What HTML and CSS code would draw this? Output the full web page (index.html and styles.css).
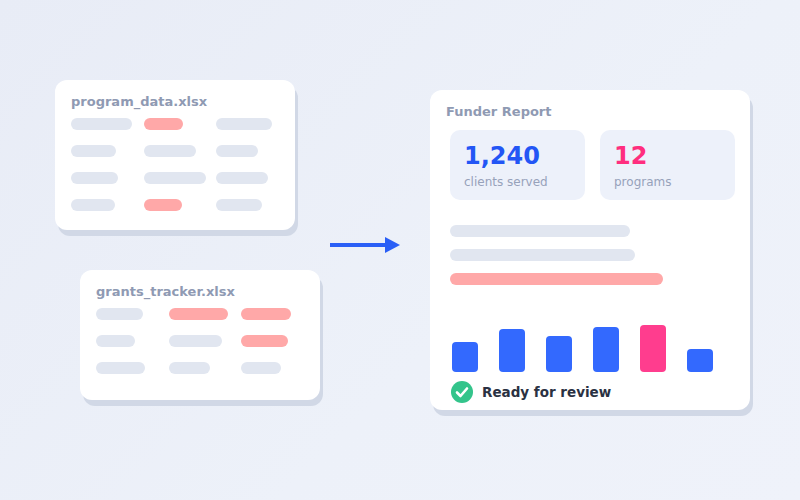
FILE: index.html
```html
<!DOCTYPE html>
<html lang="en">
<head>
<meta charset="utf-8">
<title>Funder Report</title>
<link rel="stylesheet" href="styles.css">
</head>
<body>
<main class="stage">
  <section class="sources">
    <div class="sheet sheet-program">
      <div class="sheet-title">program_data.xlsx</div>
      <div class="cells">
        <span class="cell" style="width:61px"></span>
        <span class="cell hot" style="width:39px"></span>
        <span class="cell" style="width:56px"></span>
        <span class="cell" style="width:45px"></span>
        <span class="cell" style="width:52px"></span>
        <span class="cell" style="width:42px"></span>
        <span class="cell" style="width:47px"></span>
        <span class="cell" style="width:62px"></span>
        <span class="cell" style="width:52px"></span>
        <span class="cell" style="width:44px"></span>
        <span class="cell hot" style="width:38px"></span>
        <span class="cell" style="width:46px"></span>
      </div>
    </div>
    <div class="sheet sheet-grants">
      <div class="sheet-title">grants_tracker.xlsx</div>
      <div class="cells">
        <span class="cell" style="width:47px"></span>
        <span class="cell hot" style="width:59px"></span>
        <span class="cell hot" style="width:50px"></span>
        <span class="cell" style="width:39px"></span>
        <span class="cell" style="width:53px"></span>
        <span class="cell hot" style="width:47px"></span>
        <span class="cell" style="width:49px"></span>
        <span class="cell" style="width:41px"></span>
        <span class="cell" style="width:40px"></span>
      </div>
    </div>
  </section>

  <svg class="arrow" width="70" height="16" viewBox="0 0 70 16" aria-hidden="true">
    <rect x="0" y="6" width="57" height="4" fill="#2a5ff6"/>
    <polygon points="55,0 70,8 55,16" fill="#2a5ff6"/>
  </svg>

  <section class="report">
    <div class="report-title">Funder Report</div>
    <div class="stats">
      <div class="stat">
        <div class="stat-num blue">1,240</div>
        <div class="stat-label">clients served</div>
      </div>
      <div class="stat">
        <div class="stat-num pink">12</div>
        <div class="stat-label">programs</div>
      </div>
    </div>
    <div class="lines">
      <span class="line" style="width:180px"></span>
      <span class="line" style="width:185px"></span>
      <span class="line hot" style="width:213px"></span>
    </div>
    <div class="bars">
      <span class="bar" style="height:30px"></span>
      <span class="bar" style="height:43px"></span>
      <span class="bar" style="height:36px"></span>
      <span class="bar" style="height:45px"></span>
      <span class="bar accent" style="height:47px"></span>
      <span class="bar" style="height:23px"></span>
    </div>
    <div class="status">
      <svg class="check" width="22" height="22" viewBox="0 0 22 22" aria-hidden="true">
        <circle cx="11" cy="11" r="11" fill="#33c48b"/>
        <path d="M6 11.5 L9.5 15 L16 7.5" fill="none" stroke="#ffffff" stroke-width="2.6" stroke-linecap="round" stroke-linejoin="round"/>
      </svg>
      <span class="status-text">Ready for review</span>
    </div>
  </section>
</main>
</body>
</html>
```

FILE: styles.css
```css
* {
  box-sizing: border-box;
}

html, body {
  margin: 0;
  padding: 0;
}

body {
  width: 800px;
  height: 500px;
  overflow: hidden;
  background: linear-gradient(135deg, #e8ecf6 0%, #edf1f9 60%, #eff2fa 100%);
  font-family: "DejaVu Sans", "Liberation Sans", sans-serif;
}

.stage {
  display: flex;
  align-items: flex-start;
  padding: 80px 0 0 55px;
}

.sources {
  display: flex;
  flex-direction: column;
  gap: 40px;
  width: 265px;
}

.sheet {
  width: 240px;
  background: #ffffff;
  border-radius: 12px;
  box-shadow: 3px 6px 0 #d1d8e6;
  padding: 14px 16px 0 16px;
}

.sheet-program {
  height: 150px;
}

.sheet-grants {
  height: 130px;
  margin-left: 25px;
}

.sheet-title,
.report-title {
  font-size: 13px;
  line-height: 16px;
  font-weight: bold;
  color: #8f9ab3;
}

.cells {
  display: grid;
  grid-template-columns: 73px 72px auto;
  row-gap: 15px;
  margin-top: 8px;
}

.cell {
  display: block;
  height: 12px;
  border-radius: 6px;
  background: #e1e6f0;
}

.cell.hot {
  background: #ffa8a8;
}

.arrow {
  display: block;
  margin: 157px 0 0 10px;
}

.report {
  width: 320px;
  height: 320px;
  margin: 10px 0 0 30px;
  background: #ffffff;
  border-radius: 12px;
  box-shadow: 3px 6px 0 #d1d8e6;
  padding: 14px 15px 0 16px;
}

.stats {
  display: flex;
  gap: 15px;
  margin: 10px 0 0 4px;
}

.stat {
  width: 135px;
  height: 70px;
  border-radius: 10px;
  background: #edf1fa;
  padding: 12px 0 0 14px;
}

.stat-num {
  font-size: 24px;
  line-height: 28px;
  font-weight: bold;
}

.stat-num.blue {
  color: #2356f5;
}

.stat-num.pink {
  color: #ff2e7e;
}

.stat-label {
  font-size: 12px;
  line-height: 16px;
  color: #97a2ba;
  margin-top: 4px;
}

.lines {
  display: flex;
  flex-direction: column;
  gap: 12px;
  margin: 25px 0 0 4px;
}

.line {
  display: block;
  height: 12px;
  border-radius: 6px;
  background: #e1e6f0;
}

.line.hot {
  background: #ffa8a8;
}

.bars {
  display: flex;
  align-items: flex-end;
  gap: 21px;
  height: 47px;
  margin: 40px 0 0 6px;
}

.bar {
  display: block;
  width: 26px;
  border-radius: 4px;
  background: #3369fe;
}

.bar.accent {
  background: #ff3d8e;
}

.status {
  display: flex;
  align-items: center;
  gap: 9px;
  margin: 9px 0 0 5px;
}

.check {
  display: block;
  flex: none;
}

.status-text {
  font-size: 13.5px;
  line-height: 22px;
  font-weight: bold;
  color: #2a3142;
}
```
